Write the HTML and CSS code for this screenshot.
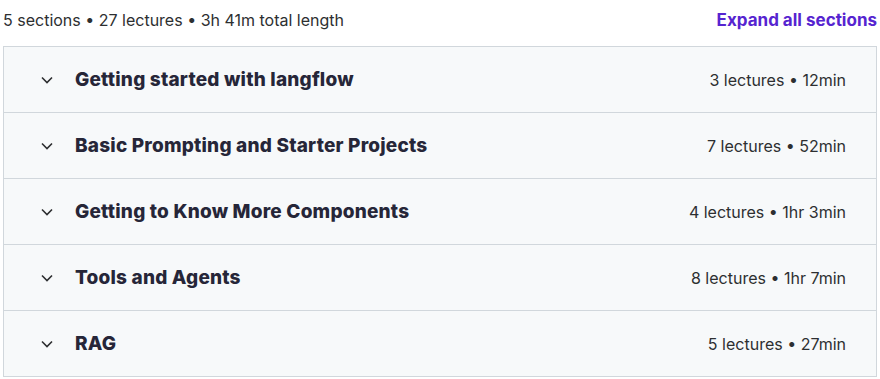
FILE: index.html
```html
<!DOCTYPE html>
<html lang="en">
<head>
  <meta charset="UTF-8" />
  <title>Course content</title>
  <link rel="stylesheet" href="styles.css">
</head>
<body>
  <div class="curriculum">
    <div class="summary">
      <span>5 sections • 27 lectures • 3h 41m total length</span>
      <button class="expand">Expand all sections</button>
    </div>

    <div class="sections">
      <div class="section">
        <svg class="chevron" viewBox="0 0 12 8"><path d="M1 1.5l5 5 5-5"/></svg>
        <h3>Getting started with langflow</h3>
        <span class="meta">3 lectures • 12min</span>
      </div>
      <div class="section">
        <svg class="chevron" viewBox="0 0 12 8"><path d="M1 1.5l5 5 5-5"/></svg>
        <h3>Basic Prompting and Starter Projects</h3>
        <span class="meta">7 lectures • 52min</span>
      </div>
      <div class="section">
        <svg class="chevron" viewBox="0 0 12 8"><path d="M1 1.5l5 5 5-5"/></svg>
        <h3>Getting to Know More Components</h3>
        <span class="meta">4 lectures • 1hr 3min</span>
      </div>
      <div class="section">
        <svg class="chevron" viewBox="0 0 12 8"><path d="M1 1.5l5 5 5-5"/></svg>
        <h3>Tools and Agents</h3>
        <span class="meta">8 lectures • 1hr 7min</span>
      </div>
      <div class="section">
        <svg class="chevron" viewBox="0 0 12 8"><path d="M1 1.5l5 5 5-5"/></svg>
        <h3>RAG</h3>
        <span class="meta">5 lectures • 27min</span>
      </div>
    </div>
  </div>
</body>
</html>
```

FILE: styles.css
```css
* {
  box-sizing: border-box;
}
body {
  margin: 0;
  background: #fff;
  color: #2d2f31;
  font-family: Inter, 'Liberation Sans', sans-serif;
}

.curriculum {
  padding: 0 3px;
}

/* === Summary line === */
.summary {
  display: flex;
  justify-content: space-between;
  align-items: center;
  height: 46px;
  padding-bottom: 6px;
  font-size: 16px;
  color: #2d2f31;
}
.expand {
  border: none;
  background: none;
  padding: 0;
  font-family: Inter, sans-serif;
  font-weight: 700;
  font-size: 17px;
  color: #5624d0;
  cursor: pointer;
}

/* === Sections === */
.sections {
  border: 1px solid #d1d7dc;
  border-bottom: none;
}
.section {
  display: flex;
  align-items: center;
  height: 66px;
  padding: 0 30px 0 37px;
  background: #f7f9fa;
  border-bottom: 1px solid #d1d7dc;
}
.chevron {
  width: 12px;
  height: 8px;
  fill: none;
  stroke: #2d2f31;
  stroke-width: 1.6;
  margin-right: 22px;
  margin-top: 1px;
}
.section h3 {
  flex: 1;
  margin: 0;
  font-family: Inter, sans-serif;
  font-weight: 800;
  font-size: 19px;
  letter-spacing: 0.2px;
  color: #262638;
}
.meta {
  font-size: 16px;
  color: #2d2f31;
}
```
